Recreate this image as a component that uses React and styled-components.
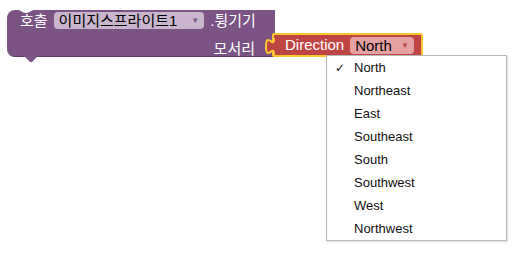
import React from 'react';
import styled, { createGlobalStyle } from 'styled-components';

const GlobalStyle = createGlobalStyle`
  body {
    margin: 0;
    background: #ffffff;
  }
`;

const Workspace = styled.div`
  position: relative;
  width: 514px;
  height: 254px;
  overflow: hidden;
  background: #ffffff;
  font-family: "Liberation Sans", "Noto Sans CJK KR", sans-serif;
`;

const CallBlock = styled.div`
  position: absolute;
  left: 7px;
  top: 10px;
  width: 268px;
  height: 47px;
  box-sizing: border-box;
  padding-top: 2px;
  background: #7c5385;
  border-radius: 8px 0 0 8px;
  border-bottom: 1px solid #5e3d66;
  color: #ffffff;
  font-size: 15px;
`;

const TopNotch = styled.svg`
  position: absolute;
  left: 11px;
  top: 0;
`;

const BottomTab = styled.svg`
  position: absolute;
  left: 16px;
  bottom: -7px;
`;

const Row = styled.div`
  display: flex;
  align-items: center;
  gap: 6px;
  height: ${p => p.$h}px;
  padding: ${p => p.$pad};
  justify-content: ${p => (p.$end ? 'flex-end' : 'flex-start')};
  white-space: nowrap;
`;

const Label = styled.span`
  line-height: 18px;
`;

const Field = styled.div`
  display: flex;
  align-items: center;
  height: 17px;
  padding: 0 5px;
  border-radius: 4px;
  background: ${p => p.$bg};
  color: #000000;
  font-size: 15px;
  line-height: 17px;
`;

const Arrow = styled.span`
  margin-left: ${p => p.$gap}px;
  font-size: 8px;
  color: ${p => p.$color};
`;

const DirectionBlock = styled.div`
  position: absolute;
  left: 272px;
  top: 33px;
  width: 151px;
  height: 24px;
  box-sizing: border-box;
  border: 2px solid #fdc830;
  border-radius: 2px;
  background: #bf4545;
  color: #ffffff;
  font-size: 15px;
  display: flex;
  align-items: center;
  gap: 6px;
  padding-left: 11px;
`;

const OutputTab = styled.svg`
  position: absolute;
  left: -13px;
  top: 3px;
`;

const Menu = styled.div`
  position: absolute;
  left: 326px;
  top: 55px;
  width: 181px;
  box-sizing: border-box;
  background: #ffffff;
  border: 1px solid #b8b8b8;
  box-shadow: 1px 1px 2px rgba(0, 0, 0, 0.15);
  font-family: "Liberation Sans", Arial, sans-serif;
  font-size: 13px;
  color: #111111;
`;

const MenuItem = styled.div`
  display: flex;
  align-items: center;
  height: 23px;
`;

const Check = styled.span`
  width: 27px;
  box-sizing: border-box;
  padding-left: 8px;
  font-family: "DejaVu Sans", sans-serif;
  font-size: 12px;
`;

const directions = ['North', 'Northeast', 'East', 'Southeast', 'South', 'Southwest', 'West', 'Northwest'];

export default function App() {
  return (
    <Workspace>
      <GlobalStyle />
      <CallBlock>
        <TopNotch width="16" height="4" viewBox="0 0 16 4">
          <path d="M0,0 C3,0 4,3 8,3 C12,3 13,0 16,0 Z" fill="#ffffff" />
        </TopNotch>
        <Row $h={17} $pad="0 0 0 13px">
          <Label>호출</Label>
          <Field $bg="#c9b5cd">
            이미지스프라이트1
            <Arrow $gap={14} $color="#7c5385">▼</Arrow>
          </Field>
          <Label>.튕기기</Label>
        </Row>
        <Row $h={28} $pad="6px 20px 0 0" $end>
          <Label>모서리</Label>
        </Row>
        <BottomTab width="16" height="8" viewBox="0 0 16 8">
          <path d="M0,0 L16,0 L9.5,6.5 Q8,8 6.5,6.5 Z" fill="#7c5385" />
        </BottomTab>
      </CallBlock>

      <DirectionBlock>
        <OutputTab width="17" height="18" viewBox="0 0 17 18">
          <path d="M13,1 c0,10 -8,-8 -8,7.5 s8,-2.5 8,7.5 L17,16 L17,1 Z" fill="#bf4545" />
          <path d="M13,0 L13,1 c0,10 -8,-8 -8,7.5 s8,-2.5 8,7.5 L13,17" fill="none" stroke="#fdc830" strokeWidth="2" />
        </OutputTab>
        <Label>Direction</Label>
        <Field $bg="#e6a2a2">
          North
          <Arrow $gap={9} $color="#bf4545">▼</Arrow>
        </Field>
      </DirectionBlock>

      <Menu>
        {directions.map(d => (
          <MenuItem key={d}>
            <Check>{d === 'North' ? '✓' : ''}</Check>
            <span>{d}</span>
          </MenuItem>
        ))}
      </Menu>
    </Workspace>
  );
}
